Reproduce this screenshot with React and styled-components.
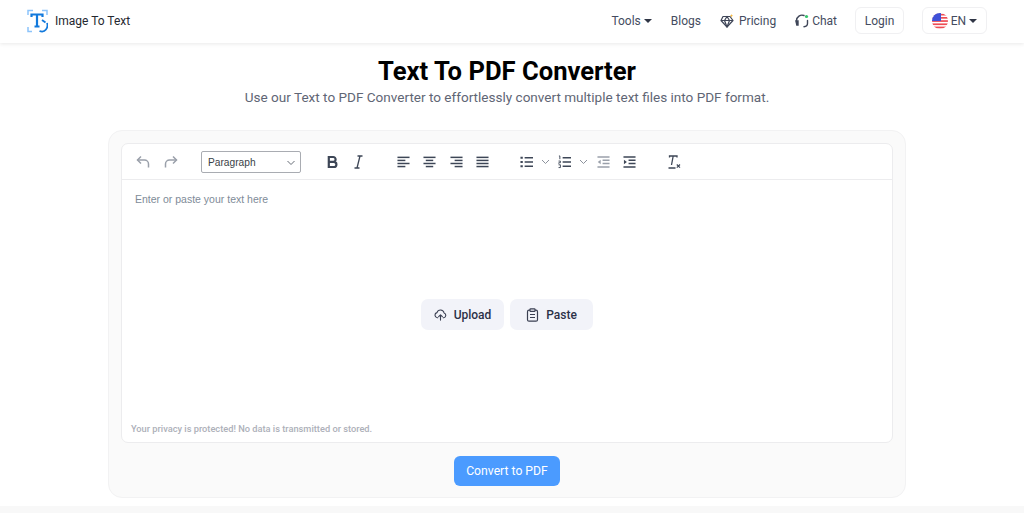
import React from 'react'
import styled, { createGlobalStyle } from 'styled-components'

const GlobalStyle = createGlobalStyle`
  html, body { margin: 0; padding: 0; background: #fff; }
  * { box-sizing: border-box; }
  body { font-family: Roboto, "Liberation Sans", sans-serif; color: #3a4256; }
`

const Header = styled.header`
  height: 43px;
  display: flex;
  align-items: center;
  justify-content: space-between;
  padding: 0 37px 2px 27px;
  background: #fff;
  box-shadow: 0 1px 4px rgba(0, 0, 0, 0.09);
`

const Brand = styled.div`
  display: flex;
  align-items: center;
  gap: 7px;
  font-size: 12px;
  color: #25282f;
`

const Nav = styled.nav`
  display: flex;
  align-items: center;
`

const NavItem = styled.span`
  display: flex;
  align-items: center;
  gap: ${props => props.$gap}px;
  margin-right: ${props => props.$after}px;
  font-size: 12px;
  color: #444c60;
`

const Caret = styled.i`
  width: 0;
  height: 0;
  border-left: 4px solid transparent;
  border-right: 4px solid transparent;
  border-top: 4.5px solid #2f3545;
`

const HeaderButton = styled.span`
  height: 27px;
  display: flex;
  align-items: center;
  justify-content: center;
  gap: 3px;
  width: ${props => props.$width}px;
  margin-right: ${props => props.$after || 0}px;
  border: 1px solid #f0f0f2;
  border-radius: 6px;
  font-size: 12px;
  color: #444c60;
`

const Main = styled.main`
  height: 463px;
  padding: 13px 10px 0 0;
  display: flex;
  flex-direction: column;
  align-items: center;
`

const Title = styled.h1`
  margin: 0;
  font-size: 25.6px;
  line-height: 30px;
  font-weight: 700;
  color: #000;
`

const Subtitle = styled.p`
  margin: 1px 0 0;
  font-size: 13.55px;
  line-height: 20px;
  color: #5f6675;
`

const Card = styled.section`
  width: 798px;
  height: 368px;
  margin-top: 23px;
  padding: 12px 12px 11px;
  display: flex;
  flex-direction: column;
  align-items: center;
  background: #fafafa;
  border: 1px solid #f2f2f3;
  border-radius: 14px;
`

const Editor = styled.div`
  width: 772px;
  height: 300px;
  flex: none;
  display: flex;
  flex-direction: column;
  background: #fff;
  border: 1px solid #ececee;
  border-radius: 7px;
`

const Toolbar = styled.div`
  height: 36px;
  flex: none;
  display: flex;
  align-items: center;
  padding-left: 14px;
  border-bottom: 1px solid #ececee;
`

const ToolGroup = styled.div`
  display: flex;
  align-items: center;
  gap: ${props => props.$gap}px;
  margin-right: ${props => props.$after || 0}px;
`

const ToolIcon = styled.svg`
  width: ${props => props.width}px;
  height: 14px;
  display: block;
  color: ${props => props.$faint ? '#9aa0aa' : '#3d4656'};
`

const FormatSelect = styled.div`
  width: 100px;
  height: 22px;
  display: flex;
  align-items: center;
  justify-content: space-between;
  padding: 2px 4px 0 6px;
  border: 1px solid #a9acb2;
  border-radius: 2px;
  font-family: "Liberation Sans", sans-serif;
  font-size: 10.2px;
  color: #3a3f48;
`

const EditorBody = styled.div`
  flex: 1;
  display: flex;
  flex-direction: column;
  padding: 12px 9px 7px;
`

const Placeholder = styled.div`
  margin-left: 4px;
  font-family: "Liberation Sans", sans-serif;
  font-size: 10.5px;
  line-height: 14px;
  color: #808b98;
`

const Actions = styled.div`
  flex: 1;
  display: flex;
  align-items: center;
  justify-content: center;
  gap: 6px;
`

const ActionButton = styled.span`
  width: 83px;
  height: 31px;
  display: flex;
  align-items: center;
  justify-content: center;
  gap: 7px;
  background: #f2f3f9;
  border-radius: 7px;
  font-size: 12px;
  font-weight: 500;
  color: #2c3148;
`

const Privacy = styled.div`
  font-size: 9.25px;
  line-height: 12px;
  font-weight: 500;
  color: #adb0b9;
`

const ConvertButton = styled.span`
  margin-top: 13px;
  width: 106px;
  height: 30px;
  flex: none;
  display: flex;
  align-items: center;
  justify-content: center;
  background: #4b9bff;
  border-radius: 6px;
  font-size: 12.2px;
  color: #fff;
`

const FooterBand = styled.div`
  height: 7px;
  background: #f8f8f8;
`

const LogoIcon = () => (
  <svg width="21" height="24" viewBox="0 0 21 24" fill="none">
    <g stroke="#8cc4fb" strokeWidth="1.5">
      <path d="M1 6V1.500h5" />
      <path d="M15 1.500h5V6" />
      <path d="M1 18v4.500h4" />
    </g>
    <path d="M4.500 8V5.500h11V8M10 5.500v12M7.500 17.500h5" stroke="#1279dc" strokeWidth="2.200" />
    <path d="M20 14a6.500 6.500 0 0 1-1 6.500c-1.500 2-4 2.500-6.500 1.500" stroke="#1279dc" strokeWidth="1.800" />
    <path d="M15 11l3.500 2.500" stroke="#1279dc" strokeWidth="1.800" />
  </svg>
)

const DiamondIcon = () => (
  <svg width="14" height="14" viewBox="0 0 14 14" fill="none" stroke="#3f4658" strokeWidth="1.200" strokeLinejoin="round">
    <path d="M3 2.500h7L13 6.500 7 13 1 6.500z" />
    <path d="M1 6.500h12M4.500 6.500L7 13l2.500-6.500L7 2.500z" />
    <path d="M11.500 0l.5 1.200 1.200.5-1.200.5-.5 1.200-.5-1.200-1.200-.5 1.200-.5z" fill="#f5b942" stroke="none" />
  </svg>
)

const ChatIcon = () => (
  <svg width="14" height="14" viewBox="0 0 14 14" fill="none" stroke="#3f4658" strokeWidth="1.400" strokeLinecap="round">
    <path d="M1.500 8V6.500A5.500 5.500 0 0 1 9 1.500" />
    <path d="M1 7h2v4H1.800z" fill="#3f4658" />
    <path d="M12.500 6.500v3c0 1.800-1.500 3-3.500 3.200" />
    <circle cx="11.500" cy="2.500" r="1.600" fill="#35c46c" stroke="none" />
  </svg>
)

const FlagIcon = () => (
  <svg width="16" height="16" viewBox="0 0 16 16">
    <defs>
      <clipPath id="flag-round"><circle cx="8" cy="8" r="8" /></clipPath>
    </defs>
    <g clipPath="url(#flag-round)">
      <rect width="16" height="16" fill="#fff" />
      {[0, 3.200, 6.400, 9.600, 12.800].map(y => <rect key={y} y={y + 0.8} width="16" height="1.700" fill="#ee4d55" />)}
      <rect width="9" height="8" fill="#3f51d8" />
    </g>
  </svg>
)

const Chevron = ({ width = 9, color = '#8c929c' }) => (
  <svg width={width} height="6" viewBox="0 0 9 6" fill="none" stroke={color} strokeWidth="1">
    <path d="M1 1l3.500 3.500L8 1" />
  </svg>
)

const Lines = ({ rows, faint }) => (
  <ToolIcon width="13" viewBox="0 0 14 14" $faint={faint} fill="none" stroke="currentColor" strokeWidth="1.600">
    {rows.map(([x1, x2], i) => <path key={i} d={`M${x1} ${2 + i * 3.300}H${x2}`} />)}
  </ToolIcon>
)

const ListIcon = ({ numbered }) => (
  <ToolIcon width="13" viewBox="0 0 14 14" fill="none" stroke="currentColor" strokeWidth="1.600">
    <path d="M5 2.500h9M5 7h9M5 11.500h9" />
    {numbered
      ? <path d="M1 .5h1v3.500M.6 6h2v1.800H.8v1M.6 10h2v3H.6" strokeWidth="1" />
      : <path d="M.5 2.500h2.500M.5 7h2.500M.5 11.500h2.500" strokeWidth="2.200" />}
  </ToolIcon>
)

const IndentIcon = ({ out, faint }) => (
  <ToolIcon width="13" viewBox="0 0 14 14" $faint={faint} fill="none" stroke="currentColor" strokeWidth="1.600">
    <path d="M.5 1.500h13M6 5h7.500M6 8.500h7.500M.5 12.500h13" />
    <path d={out ? 'M4 4.500v5L.8 7z' : 'M1 4.500v5L4.200 7z'} fill="currentColor" stroke="none" />
  </ToolIcon>
)

const UndoIcon = ({ flip }) => (
  <ToolIcon width="14" viewBox="0 0 14 14" $faint fill="none" stroke="currentColor" strokeWidth="1.500" style={flip ? { transform: 'scaleX(-1)' } : undefined}>
    <path d="M5 1.500L1.500 5 5 8.500" />
    <path d="M1.500 5h7a4 4 0 0 1 4 4v3.500" />
  </ToolIcon>
)

const BoldIcon = () => (
  <ToolIcon width="11" viewBox="0 0 11 14" fill="none" stroke="currentColor" strokeWidth="2.200">
    <path d="M1.800 2h4.400a2.400 2.400 0 0 1 0 4.800H1.800zM1.800 6.800h5a2.600 2.600 0 0 1 0 5.200h-5z" />
  </ToolIcon>
)

const ItalicIcon = () => (
  <ToolIcon width="9" viewBox="0 0 9 14" fill="none" stroke="currentColor" strokeWidth="1.300">
    <path d="M3.500 1h5M.5 13h5M6 1L3 13" />
  </ToolIcon>
)

const ClearIcon = () => (
  <ToolIcon width="13" viewBox="0 0 13 14" fill="none" stroke="currentColor" strokeWidth="1.300">
    <path d="M1.500 2.500V1h7.500v1.500M5.200 1L3.500 10M.5 13h7" />
    <path d="M8.800 9.500l3.200 3.200M12 9.500l-3.200 3.200" strokeWidth="1.100" />
  </ToolIcon>
)

const UploadIcon = () => (
  <svg width="13" height="13" viewBox="0 0 14 14" fill="none" stroke="#3a3f52" strokeWidth="1.200" strokeLinecap="round" strokeLinejoin="round">
    <path d="M4 10.500H3.500a2.800 2.800 0 0 1-.3-5.500 4 4 0 0 1 7.700.3 2.700 2.700 0 0 1-.4 5.200H10" />
    <path d="M7 13V7.500M5 9.300L7 7.300l2 2" />
  </svg>
)

const PasteIcon = () => (
  <svg width="13" height="14" viewBox="0 0 13 14" fill="none" stroke="#3a3f52" strokeWidth="1.200" strokeLinejoin="round">
    <rect x="1.500" y="2.200" width="10" height="11" rx="1.500" />
    <rect x="4" y=".8" width="5" height="2.600" rx=".6" fill="#f2f3f9" />
    <path d="M4 6.500h5M4 9.500h5" />
  </svg>
)

const App = () => (
  <>
    <GlobalStyle />
    <Header>
      <Brand>
        <LogoIcon />
        Image To Text
      </Brand>
      <Nav>
        <NavItem $gap={3} $after={19}>Tools <Caret /></NavItem>
        <NavItem $gap={0} $after={19}>Blogs</NavItem>
        <NavItem $gap={5} $after={19}><DiamondIcon />Pricing</NavItem>
        <NavItem $gap={3} $after={18}><ChatIcon />Chat</NavItem>
        <HeaderButton $width={49} $after={18}>Login</HeaderButton>
        <HeaderButton $width={65}><FlagIcon />EN <Caret /></HeaderButton>
      </Nav>
    </Header>
    <Main>
      <Title>Text To PDF Converter</Title>
      <Subtitle>Use our Text to PDF Converter to effortlessly convert multiple text files into PDF format.</Subtitle>
      <Card>
        <Editor>
          <Toolbar>
            <ToolGroup $gap={14} $after={23}><UndoIcon /><UndoIcon flip /></ToolGroup>
            <ToolGroup $gap={0} $after={26}>
              <FormatSelect>Paragraph <Chevron width={10} color="#666c76" /></FormatSelect>
            </ToolGroup>
            <ToolGroup $gap={16} $after={34}><BoldIcon /><ItalicIcon /></ToolGroup>
            <ToolGroup $gap={13.300} $after={31}>
              <Lines rows={[[0.5, 13.5], [0.5, 9], [0.5, 13.5], [0.5, 9]]} />
              <Lines rows={[[0.5, 13.5], [3, 11], [0.5, 13.5], [3, 11]]} />
              <Lines rows={[[0.5, 13.5], [5, 13.5], [0.5, 13.5], [5, 13.5]]} />
              <Lines rows={[[0.5, 13.5], [0.5, 13.5], [0.5, 13.5], [0.5, 13.5]]} />
            </ToolGroup>
            <ToolGroup $gap={8} $after={8}><ListIcon /><Chevron /></ToolGroup>
            <ToolGroup $gap={8} $after={9}><ListIcon numbered /><Chevron /></ToolGroup>
            <ToolGroup $gap={13} $after={32}><IndentIcon out faint /><IndentIcon /></ToolGroup>
            <ClearIcon />
          </Toolbar>
          <EditorBody>
            <Placeholder>Enter or paste your text here</Placeholder>
            <Actions>
              <ActionButton><UploadIcon />Upload</ActionButton>
              <ActionButton><PasteIcon />Paste</ActionButton>
            </Actions>
            <Privacy>Your privacy is protected! No data is transmitted or stored.</Privacy>
          </EditorBody>
        </Editor>
        <ConvertButton>Convert to PDF</ConvertButton>
      </Card>
    </Main>
    <FooterBand />
  </>
)

export default App
